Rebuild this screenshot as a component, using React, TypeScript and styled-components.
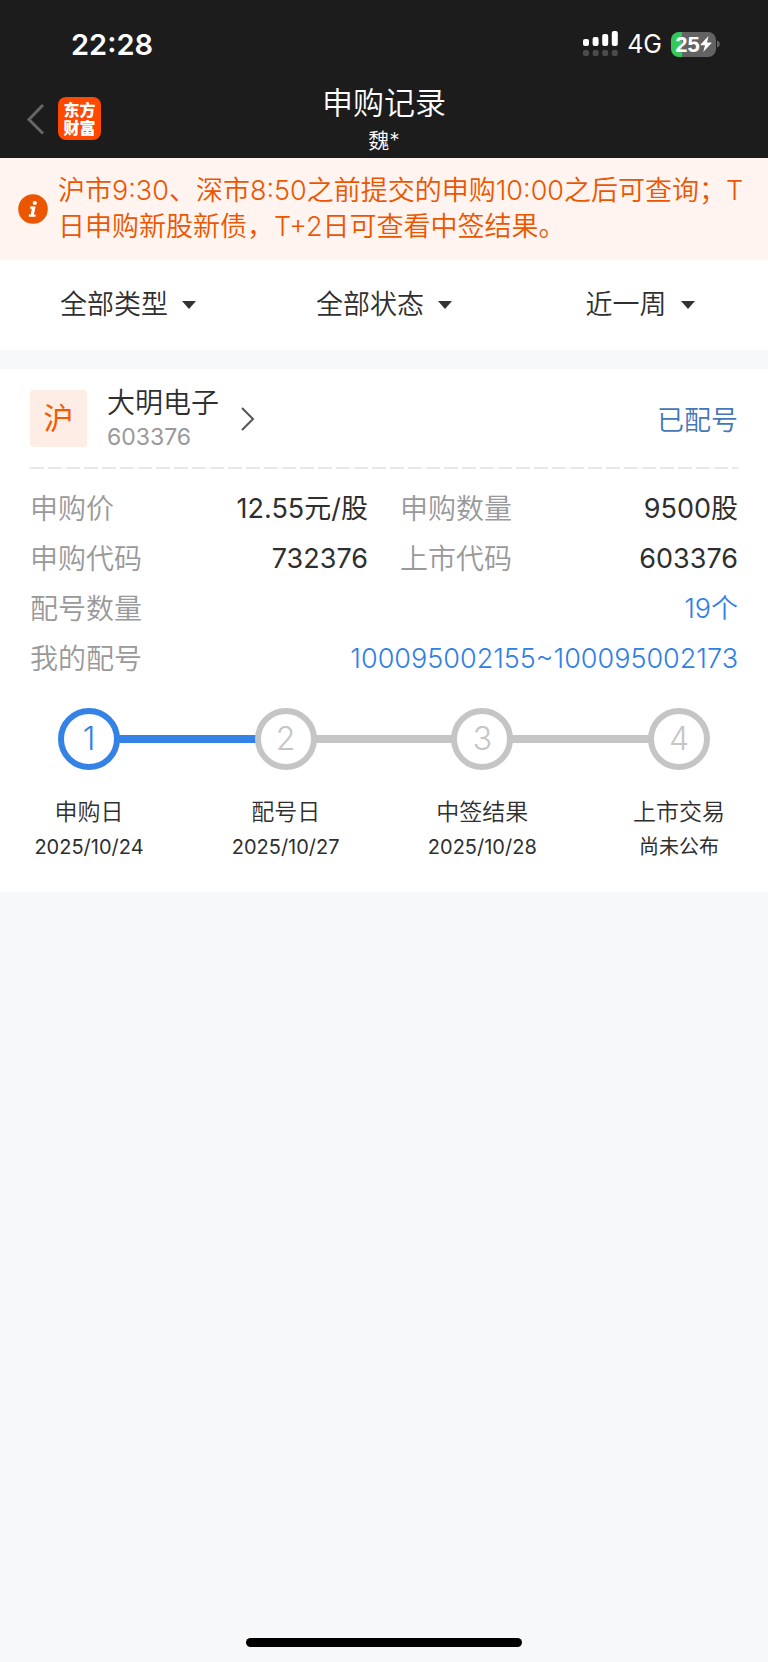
import React from 'react';
import styled, { createGlobalStyle } from 'styled-components';

const GlobalStyle = createGlobalStyle`
  *, *::before, *::after { box-sizing: border-box; }
  body {
    margin: 0;
    background: #f6f8fa;
    color: #2f2f2f;
    font-family: Inter, "Noto Sans CJK SC", sans-serif;
    font-weight: 350;
  }
  h1, h2, p, dl, dd, ol { margin: 0; padding: 0; font-weight: inherit; }
  button, select { font: inherit; color: inherit; border: 0; padding: 0; background: none; cursor: pointer; }
  a { color: inherit; text-decoration: none; }
  svg { display: block; flex: none; }
`;

const Page = styled.div`
  min-height: 100vh;
  display: flex;
  flex-direction: column;
`;

const Header = styled.header`
  background: #1c1c1c;
  color: #fff;
`;

const StatusBar = styled.div`
  display: flex;
  align-items: center;
  justify-content: space-between;
  height: 79px;
  padding: 9px 48px 0 71px;
`;

const Clock = styled.time`
  font-size: 29px;
  font-weight: 600;
`;

const Indicators = styled.div`
  display: flex;
  align-items: center;
`;

const Network = styled.span`
  margin: 0 9px;
  font-size: 25px;
  font-weight: 400;
  line-height: 26px;
`;

const Battery = styled.div`
  display: flex;
  align-items: center;
  justify-content: center;
  width: 45px;
  height: 25px;
  border-radius: 8px;
  background: linear-gradient(90deg, #34c759 25%, #636363 25%);
  font: 700 22px/25px "Liberation Sans", sans-serif;
`;

const NavBar = styled.nav`
  display: grid;
  grid-template-columns: 1fr auto 1fr;
  align-items: center;
  height: 79px;
  padding: 0 26px;
`;

const NavStart = styled.div`
  display: flex;
  align-items: center;
  gap: 13px;
`;

const Logo = styled.a`
  width: 43px;
  height: 43px;
  padding: 3px 5px;
  border-radius: 8px;
  background: #ff4800;
  font: 900 16px/18px "Noto Sans CJK SC", sans-serif;
  text-align: center;
`;

const Heading = styled.div`
  text-align: center;
`;

const Title = styled.h1`
  font-size: 31px;
  line-height: 44px;
`;

const Account = styled.p`
  font-size: 21px;
  line-height: 32px;
`;

const Notice = styled.section`
  display: flex;
  align-items: center;
  gap: 10px;
  padding: 15px 20px 15px 18px;
  background: #fff4ef;
  color: #ec5600;
  font-size: 27px;
  line-height: 36px;
`;

const Filters = styled.div`
  display: grid;
  grid-template-columns: repeat(3, 1fr);
  height: 90px;
  background: #fff;
`;

const Filter = styled.label`
  display: flex;
  align-items: center;
  justify-content: center;
  gap: 14px;
`;

const FilterSelect = styled.select`
  appearance: none;
  font-size: 27px;
  line-height: 40px;
`;

const Card = styled.article`
  margin-top: 19px;
  padding: 21px 30px 28px;
  background: #fff;
`;

const CardHead = styled.div`
  display: flex;
  align-items: center;
  justify-content: space-between;
  height: 57px;
`;

const StockLink = styled.a`
  display: flex;
  align-items: center;
`;

const Market = styled.span`
  width: 57px;
  margin-right: 20px;
  border-radius: 4px;
  background: #fdede5;
  color: #f15a00;
  font-size: 30px;
  font-weight: 400;
  line-height: 57px;
  text-align: center;
`;

const Stock = styled.div`
  margin-right: 22px;
`;

const StockName = styled.h2`
  font-size: 28px;
  line-height: 36px;
`;

const StockCode = styled.p`
  color: #999;
  font-size: 23px;
  font-weight: 400;
  line-height: 32px;
`;

const State = styled.span`
  color: #4377b6;
  font-size: 27px;
`;

const Divider = styled.hr`
  height: 2px;
  margin: 20px 0 15px;
  border: 0;
  background: repeating-linear-gradient(90deg, #e8e8e8 0 14px, transparent 14px 18px);
`;

const Details = styled.dl`
  display: grid;
  grid-template-columns: 1fr 1fr;
  column-gap: 32px;
  line-height: 50px;
`;

const Detail = styled.div<{ $wide?: boolean }>`
  display: flex;
  justify-content: space-between;
  grid-column: ${(p) => (p.$wide ? '1 / -1' : 'auto')};
`;

const Term = styled.dt`
  color: #999;
  font-size: 28px;
`;

const Value = styled.dd<{ $link?: boolean }>`
  color: ${(p) => (p.$link ? '#2f80e6' : '#2f2f2f')};
  font-size: 27px;
  font-weight: ${(p) => (p.$link ? 350 : 400)};
`;

const Track = styled.div`
  display: flex;
  align-items: center;
  margin-top: 24px;
  padding: 0 28px;
`;

const Ring = styled.span<{ $active: boolean }>`
  flex: none;
  width: 62px;
  height: 62px;
  border: 6px solid;
  border-radius: 50%;
  color: ${(p) => (p.$active ? '#3482e6' : '#c5c5c5')};
  font-size: 32px;
  font-weight: 300;
  line-height: 50px;
  text-align: center;
`;

const Connector = styled.span<{ $active: boolean }>`
  flex: 1;
  height: 8px;
  margin: 0 -1px;
  background: ${(p) => (p.$active ? '#3482e6' : '#c5c5c5')};
`;

const Steps = styled.ol`
  display: flex;
  justify-content: space-between;
  margin-top: 24px;
  list-style: none;
`;

const Step = styled.li`
  width: 118px;
  text-align: center;
  white-space: nowrap;
`;

const StepName = styled.p`
  font-size: 23px;
  line-height: 36px;
`;

const StepDate = styled.p`
  font-size: 20px;
  font-weight: 400;
  line-height: 34px;
`;

const HomeIndicator = styled.div`
  width: 36%;
  height: 9px;
  margin: auto auto 15px;
  border-radius: 5px;
  background: #000;
`;

const SignalIcon = () => (
  <svg width="35" height="26" viewBox="0 0 35 26" fill="#fff" aria-hidden="true">
    <rect x="0" y="8" width="6" height="7" rx="2" />
    <rect x="9.6" y="6" width="6" height="9" rx="2" />
    <rect x="19.2" y="3" width="6" height="12" rx="2" />
    <rect x="28.8" y="0" width="6" height="15" rx="2" />
    <g fill="#4c4c4c">
      <rect x="0" y="19" width="6" height="6" rx="2" />
      <rect x="9.6" y="19" width="6" height="6" rx="2" />
      <rect x="19.2" y="19" width="6" height="6" rx="2" />
      <rect x="28.8" y="19" width="6" height="6" rx="2" />
    </g>
  </svg>
);

const BoltIcon = () => (
  <svg width="12" height="18" viewBox="0 0 12 18" fill="#fff" aria-hidden="true">
    <path d="M8.5 1 0.6 9.6q-.4.7.4.7h4L3.2 17 11.4 8.2q.4-.8-.4-.8H7Z" />
  </svg>
);

const BatteryCap = () => (
  <svg width="4" height="8" viewBox="0 0 4 8" aria-hidden="true">
    <path d="M1 0.5a3.6 3.6 0 0 1 0 7Z" fill="#636363" />
  </svg>
);

const BackIcon = () => (
  <svg width="19" height="32" viewBox="0 0 19 32" fill="none" stroke="#666" strokeWidth="3" aria-hidden="true">
    <path d="M17 2 3 16.5 17 30.5" />
  </svg>
);

const InfoIcon = () => (
  <svg width="30" height="30" viewBox="0 0 30 30" aria-hidden="true">
    <circle cx="15" cy="15" r="14.8" fill="#ec5600" />
    <circle cx="16.8" cy="9" r="2.1" fill="#fff" />
    <path d="M12.2 13.7h4L14.4 21.5M10.8 21.7h6.8" fill="none" stroke="#fff" strokeWidth="2.2" />
    <path d="M15.6 13 14 22" stroke="#fff" strokeWidth="3" />
  </svg>
);

const CaretIcon = () => (
  <svg width="14" height="8" viewBox="0 0 14 8" aria-hidden="true">
    <path d="M0 0h14L7 8Z" fill="#333" />
  </svg>
);

const ChevronIcon = () => (
  <svg width="14" height="24" viewBox="0 0 14 24" fill="none" stroke="#555" strokeWidth="2" aria-hidden="true">
    <path d="M1 1 12 12 1 23" />
  </svg>
);

const filters = ['全部类型', '全部状态', '近一周'];

const details = [
  { term: '申购价', value: '12.55元/股' },
  { term: '申购数量', value: '9500股' },
  { term: '申购代码', value: '732376' },
  { term: '上市代码', value: '603376' },
  { term: '配号数量', value: '19个', link: true },
  { term: '我的配号', value: '100095002155~100095002173', link: true },
];

const steps = [
  { name: '申购日', date: '2025/10/24' },
  { name: '配号日', date: '2025/10/27' },
  { name: '中签结果', date: '2025/10/28' },
  { name: '上市交易', date: '尚未公布' },
];

export default function App() {
  return (
    <Page>
      <GlobalStyle />
      <Header>
        <StatusBar>
          <Clock>22:28</Clock>
          <Indicators>
            <SignalIcon />
            <Network>4G</Network>
            <Battery>
              25
              <BoltIcon />
            </Battery>
            <BatteryCap />
          </Indicators>
        </StatusBar>
        <NavBar>
          <NavStart>
            <button type="button" aria-label="返回">
              <BackIcon />
            </button>
            <Logo href="#">东方财富</Logo>
          </NavStart>
          <Heading>
            <Title>申购记录</Title>
            <Account>魏*</Account>
          </Heading>
        </NavBar>
      </Header>

      <Notice>
        <InfoIcon />
        <p>沪市9:30、深市8:50之前提交的申购10:00之后可查询；T日申购新股新债，T+2日可查看中签结果。</p>
      </Notice>

      <Filters>
        {filters.map((name) => (
          <Filter key={name}>
            <FilterSelect aria-label={name}>
              <option>{name}</option>
            </FilterSelect>
            <CaretIcon />
          </Filter>
        ))}
      </Filters>

      <Card>
        <CardHead>
          <StockLink href="#">
            <Market>沪</Market>
            <Stock>
              <StockName>大明电子</StockName>
              <StockCode>603376</StockCode>
            </Stock>
            <ChevronIcon />
          </StockLink>
          <State>已配号</State>
        </CardHead>
        <Divider />
        <Details>
          {details.map((d) => (
            <Detail key={d.term} $wide={d.link}>
              <Term>{d.term}</Term>
              <Value $link={d.link}>{d.link ? <a href="#">{d.value}</a> : d.value}</Value>
            </Detail>
          ))}
        </Details>
        <Track>
          {steps.map((s, i) => (
            <React.Fragment key={s.name}>
              {i > 0 && <Connector $active={i === 1} />}
              <Ring $active={i === 0}>{i + 1}</Ring>
            </React.Fragment>
          ))}
        </Track>
        <Steps>
          {steps.map((s) => (
            <Step key={s.name}>
              <StepName>{s.name}</StepName>
              <StepDate>{s.date}</StepDate>
            </Step>
          ))}
        </Steps>
      </Card>
      <HomeIndicator />
    </Page>
  );
}
